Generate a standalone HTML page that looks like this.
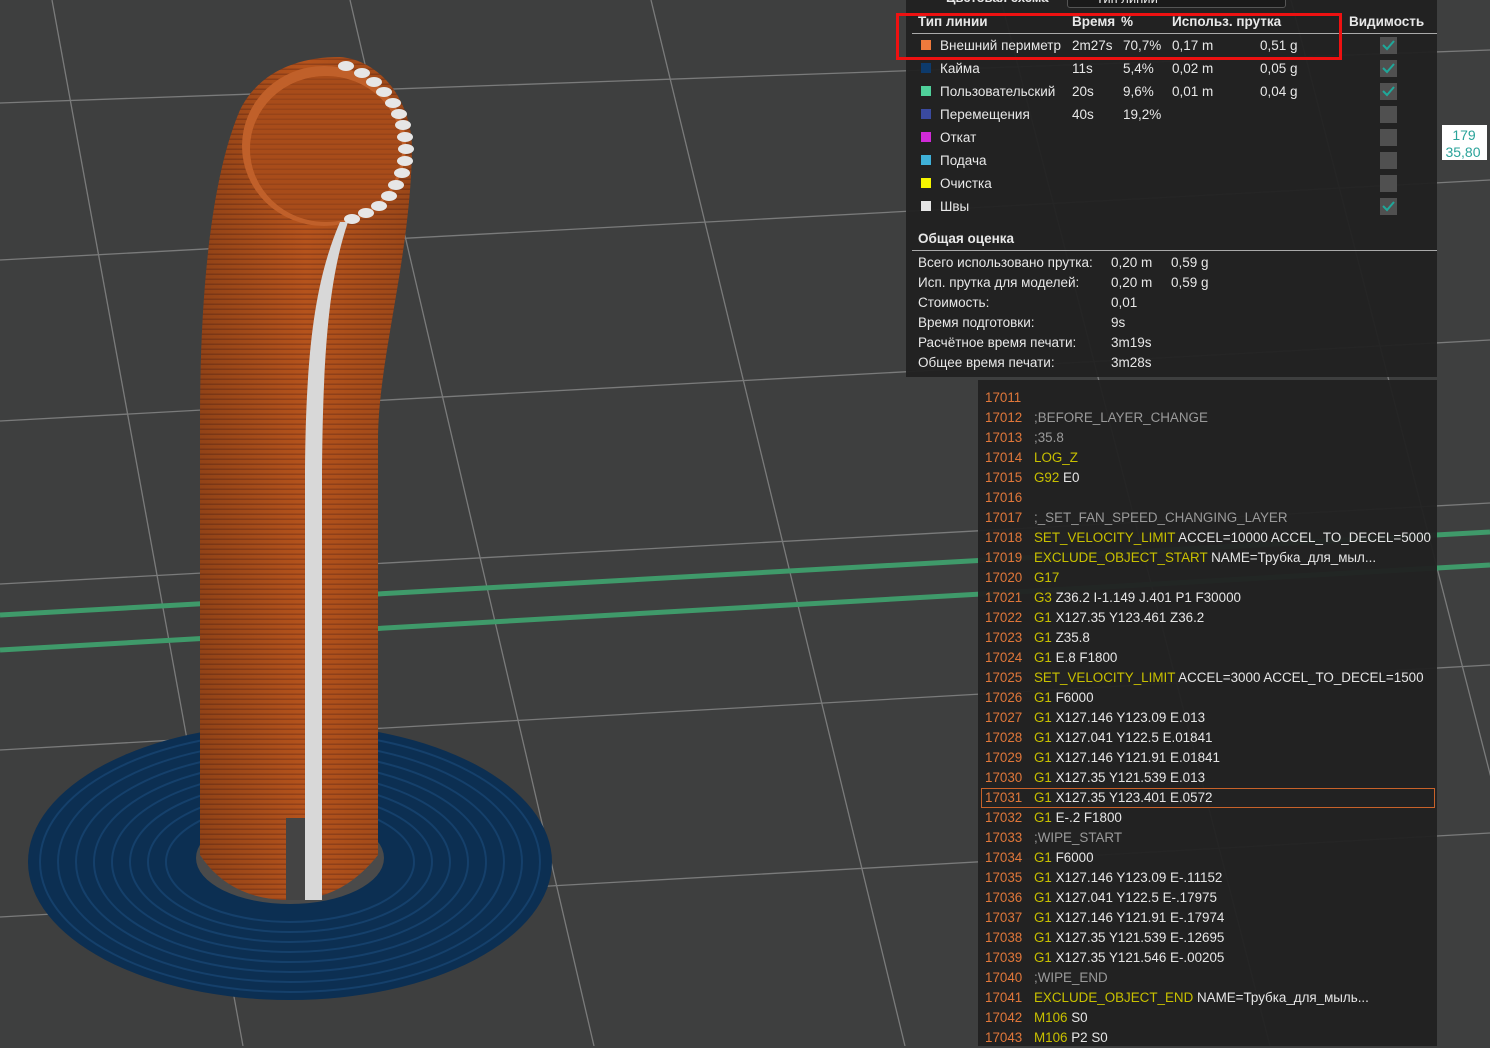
<!DOCTYPE html>
<html><head><meta charset="utf-8">
<style>
*{margin:0;padding:0;box-sizing:border-box}
body{width:1490px;height:1046px;overflow:hidden;background:#3e3f3f;font-family:"Liberation Sans","DejaVu Sans",sans-serif;position:relative}
svg.bg{position:absolute;left:0;top:0}
.panel{position:absolute;left:906px;top:0;width:531px;height:377px;background:rgba(33,33,33,0.96);color:#e8e8e8;font-size:13.5px}
.t{position:absolute;white-space:nowrap}
.b{font-weight:bold}
.sq{position:absolute;width:10px;height:10px}
.cb{position:absolute;left:474px;width:17px;height:17px;background:#505050}
.cb svg{position:absolute;left:2px;top:3px}
.code{position:absolute;left:978px;top:380px;width:459px;height:666px;background:rgba(33,33,33,0.96);font-size:13.4px;color:#e6e6e6}
.code div{position:absolute;left:7px;white-space:nowrap;height:20px;line-height:20px}
.n{color:#e0773a;display:inline-block;width:49px}
.y{color:#c8c000}
.g{color:#9a9a9a}
</style></head><body>
<svg class="bg" width="1490" height="1046" viewBox="0 0 1490 1046">
<g stroke="#8a8a8a" stroke-width="1.3" fill="none" opacity="0.8">
<line x1="52" y1="0" x2="243" y2="1046"/>
<line x1="350" y1="0" x2="594" y2="1046"/>
<line x1="651" y1="0" x2="905" y2="1046"/>
<line x1="1001" y1="0" x2="1270" y2="1046"/>
<line x1="1291" y1="0" x2="1560" y2="1046"/>
<line x1="0" y1="103" x2="1490" y2="50"/>
<line x1="0" y1="260" x2="1490" y2="180"/>
<line x1="0" y1="421" x2="1490" y2="340"/>
<line x1="0" y1="584" x2="1490" y2="503"/>
<line x1="0" y1="750" x2="1490" y2="665"/>
<line x1="0" y1="917" x2="1490" y2="833"/>
</g>
<line x1="0" y1="615" x2="1490" y2="532" stroke="#3f9a6a" stroke-width="5"/>
<line x1="0" y1="650" x2="1490" y2="565" stroke="#3f9a6a" stroke-width="5"/>
<!-- brim -->
<ellipse cx="290" cy="862" rx="262" ry="138" fill="#0c2f52"/>
<g fill="none" stroke="#15406b" stroke-width="2">
<ellipse cx="290" cy="862" rx="250" ry="130"/>
<ellipse cx="290" cy="862" rx="232" ry="120"/>
<ellipse cx="290" cy="862" rx="214" ry="110"/>
<ellipse cx="290" cy="862" rx="196" ry="100"/>
<ellipse cx="290" cy="862" rx="178" ry="90"/>
<ellipse cx="290" cy="862" rx="160" ry="80"/>
<ellipse cx="290" cy="862" rx="142" ry="70"/>
<ellipse cx="290" cy="862" rx="124" ry="60"/>
</g>
<ellipse cx="290" cy="858" rx="94" ry="46" fill="#4a4a4a"/>
<defs><pattern id="rib" width="6" height="5" patternUnits="userSpaceOnUse"><rect width="6" height="5" fill="#b5531c"/><rect y="3.5" width="6" height="1.5" fill="#94421a"/></pattern>
<linearGradient id="sh" x1="0" x2="1"><stop offset="0" stop-color="#000" stop-opacity="0.2"/><stop offset="0.5" stop-color="#000" stop-opacity="0"/><stop offset="1" stop-color="#000" stop-opacity="0.15"/></linearGradient></defs>
<path d="M200 855 L200 420 C200 300 210 180 240 110 C260 70 300 57 340 57 C380 60 412 100 412 150 C410 260 378 360 378 440 L378 855 C350 890 320 900 290 900 C250 900 220 885 200 855 Z" fill="url(#rib)"/>
<path d="M200 855 L200 420 C200 300 210 180 240 110 C260 70 300 57 340 57 C380 60 412 100 412 150 C410 260 378 360 378 440 L378 855 C350 890 320 900 290 900 C250 900 220 885 200 855 Z" fill="url(#sh)"/>
<!-- opening -->
<ellipse cx="324" cy="146" rx="82" ry="80" fill="#c0602a"/>
<ellipse cx="326" cy="149" rx="76" ry="73" fill="#9a4517"/>
<ellipse cx="326" cy="149" rx="76" ry="73" fill="url(#rib)" opacity="0.5"/>
<rect x="286" y="818" width="19" height="82" fill="#444"/>
<!-- seam -->
<path d="M305 900 L305 470 C306 350 315 280 340 222 L348 222 C328 280 323 360 322 470 L322 900 Z" fill="#d8d8d8"/>
<g fill="#e6e6e6">
<ellipse cx="346" cy="66" rx="8" ry="5"/><ellipse cx="362" cy="73" rx="8" ry="5"/><ellipse cx="374" cy="82" rx="8" ry="5"/><ellipse cx="384" cy="92" rx="8" ry="5"/><ellipse cx="393" cy="103" rx="8" ry="5"/><ellipse cx="399" cy="114" rx="8" ry="5"/><ellipse cx="403" cy="125" rx="8" ry="5"/><ellipse cx="405" cy="137" rx="8" ry="5"/><ellipse cx="406" cy="149" rx="8" ry="5"/><ellipse cx="405" cy="161" rx="8" ry="5"/><ellipse cx="402" cy="173" rx="8" ry="5"/><ellipse cx="396" cy="185" rx="8" ry="5"/><ellipse cx="389" cy="196" rx="8" ry="5"/><ellipse cx="379" cy="206" rx="8" ry="5"/><ellipse cx="366" cy="213" rx="8" ry="5"/><ellipse cx="352" cy="219" rx="8" ry="5"/>
</g>
<rect x="1442" y="125" width="45" height="35" fill="#fff"/>
<text x="1464" y="140" fill="#2aa39a" font-size="14" text-anchor="middle" font-family="Liberation Sans">179</text>
<text x="1463" y="157" fill="#2aa39a" font-size="14" text-anchor="middle" font-family="Liberation Sans">35,80</text>
</svg>

<div class="panel">
<div class="t b" style="left:40px;top:-10px;font-size:13px">Цветовая схема</div>
<div style="position:absolute;left:161px;top:-10px;width:219px;height:18px;border:1px solid #555;border-radius:3px;background:#1a1a1a"></div>
<div class="t" style="left:190px;top:-9px;font-size:13px">Тип линии</div>
<div class="t b" style="left:12px;top:14px">Тип линии</div>
<div class="t b" style="left:166px;top:14px">Время</div>
<div class="t b" style="left:215px;top:14px">%</div>
<div class="t b" style="left:266px;top:14px">Использ. прутка</div>
<div class="t b" style="left:443px;top:14px">Видимость</div>
<div style="position:absolute;left:6px;top:33px;width:525px;height:1px;background:#aaa"></div>

<div class="sq" style="left:15px;top:40px;background:#ef7a3c"></div>
<div class="t" style="left:34px;top:38px">Внешний периметр</div><div class="t" style="left:166px;top:38px">2m27s</div><div class="t" style="left:217px;top:38px">70,7%</div><div class="t" style="left:266px;top:38px">0,17 m</div><div class="t" style="left:354px;top:38px">0,51 g</div>
<div class="sq" style="left:15px;top:63px;background:#0d3a6b"></div>
<div class="t" style="left:34px;top:61px">Кайма</div><div class="t" style="left:166px;top:61px">11s</div><div class="t" style="left:217px;top:61px">5,4%</div><div class="t" style="left:266px;top:61px">0,02 m</div><div class="t" style="left:354px;top:61px">0,05 g</div>
<div class="sq" style="left:15px;top:86px;background:#4fd09a"></div>
<div class="t" style="left:34px;top:84px">Пользовательский</div><div class="t" style="left:166px;top:84px">20s</div><div class="t" style="left:217px;top:84px">9,6%</div><div class="t" style="left:266px;top:84px">0,01 m</div><div class="t" style="left:354px;top:84px">0,04 g</div>
<div class="sq" style="left:15px;top:109px;background:#3a4aa0"></div>
<div class="t" style="left:34px;top:107px">Перемещения</div><div class="t" style="left:166px;top:107px">40s</div><div class="t" style="left:217px;top:107px">19,2%</div>
<div class="sq" style="left:15px;top:132px;background:#d02ad8"></div>
<div class="t" style="left:34px;top:130px">Откат</div>
<div class="sq" style="left:15px;top:155px;background:#3fb0d8"></div>
<div class="t" style="left:34px;top:153px">Подача</div>
<div class="sq" style="left:15px;top:178px;background:#f5f500"></div>
<div class="t" style="left:34px;top:176px">Очистка</div>
<div class="sq" style="left:15px;top:201px;background:#e6e6e6"></div>
<div class="t" style="left:34px;top:199px">Швы</div>

<div class="cb" style="top:37px"><svg width="13" height="11"><path d="M1 5 L5 9 L12 1" stroke="#1fa89a" stroke-width="2" fill="none"/></svg></div>
<div class="cb" style="top:60px"><svg width="13" height="11"><path d="M1 5 L5 9 L12 1" stroke="#1fa89a" stroke-width="2" fill="none"/></svg></div>
<div class="cb" style="top:83px"><svg width="13" height="11"><path d="M1 5 L5 9 L12 1" stroke="#1fa89a" stroke-width="2" fill="none"/></svg></div>
<div class="cb" style="top:106px"></div>
<div class="cb" style="top:129px"></div>
<div class="cb" style="top:152px"></div>
<div class="cb" style="top:175px"></div>
<div class="cb" style="top:198px"><svg width="13" height="11"><path d="M1 5 L5 9 L12 1" stroke="#1fa89a" stroke-width="2" fill="none"/></svg></div>

<div class="t b" style="left:12px;top:231px">Общая оценка</div>
<div style="position:absolute;left:6px;top:250px;width:525px;height:1px;background:#aaa"></div>
<div class="t" style="left:12px;top:255px">Всего использовано прутка:</div><div class="t" style="left:205px;top:255px">0,20 m</div><div class="t" style="left:265px;top:255px">0,59 g</div>
<div class="t" style="left:12px;top:275px">Исп. прутка для моделей:</div><div class="t" style="left:205px;top:275px">0,20 m</div><div class="t" style="left:265px;top:275px">0,59 g</div>
<div class="t" style="left:12px;top:295px">Стоимость:</div><div class="t" style="left:205px;top:295px">0,01</div>
<div class="t" style="left:12px;top:315px">Время подготовки:</div><div class="t" style="left:205px;top:315px">9s</div>
<div class="t" style="left:12px;top:335px">Расчётное время печати:</div><div class="t" style="left:205px;top:335px">3m19s</div>
<div class="t" style="left:12px;top:355px">Общее время печати:</div><div class="t" style="left:205px;top:355px">3m28s</div>
</div>
<div style="position:absolute;left:896px;top:13px;width:446px;height:47px;border:3px solid #ee1111"></div>

<div class="code">
<div style="top:8px"><span class="n">17011</span></div>
<div style="top:28px"><span class="n">17012</span><span class="g">;BEFORE_LAYER_CHANGE</span></div>
<div style="top:48px"><span class="n">17013</span><span class="g">;35.8</span></div>
<div style="top:68px"><span class="n">17014</span><span class="y">LOG_Z</span></div>
<div style="top:88px"><span class="n">17015</span><span class="y">G92</span> E0</div>
<div style="top:108px"><span class="n">17016</span></div>
<div style="top:128px"><span class="n">17017</span><span class="g">;_SET_FAN_SPEED_CHANGING_LAYER</span></div>
<div style="top:148px"><span class="n">17018</span><span class="y">SET_VELOCITY_LIMIT</span> ACCEL=10000 ACCEL_TO_DECEL=5000</div>
<div style="top:168px"><span class="n">17019</span><span class="y">EXCLUDE_OBJECT_START</span> NAME=Трубка_для_мыл...</div>
<div style="top:188px"><span class="n">17020</span><span class="y">G17</span></div>
<div style="top:208px"><span class="n">17021</span><span class="y">G3</span> Z36.2 I-1.149 J.401 P1 F30000</div>
<div style="top:228px"><span class="n">17022</span><span class="y">G1</span> X127.35 Y123.461 Z36.2</div>
<div style="top:248px"><span class="n">17023</span><span class="y">G1</span> Z35.8</div>
<div style="top:268px"><span class="n">17024</span><span class="y">G1</span> E.8 F1800</div>
<div style="top:288px"><span class="n">17025</span><span class="y">SET_VELOCITY_LIMIT</span> ACCEL=3000 ACCEL_TO_DECEL=1500</div>
<div style="top:308px"><span class="n">17026</span><span class="y">G1</span> F6000</div>
<div style="top:328px"><span class="n">17027</span><span class="y">G1</span> X127.146 Y123.09 E.013</div>
<div style="top:348px"><span class="n">17028</span><span class="y">G1</span> X127.041 Y122.5 E.01841</div>
<div style="top:368px"><span class="n">17029</span><span class="y">G1</span> X127.146 Y121.91 E.01841</div>
<div style="top:388px"><span class="n">17030</span><span class="y">G1</span> X127.35 Y121.539 E.013</div>
<div style="top:408px;left:3px;width:454px;border:1px solid #c8622a;padding-left:3px;line-height:18px"><span class="n">17031</span><span class="y">G1</span> X127.35 Y123.401 E.0572</div>
<div style="top:428px"><span class="n">17032</span><span class="y">G1</span> E-.2 F1800</div>
<div style="top:448px"><span class="n">17033</span><span class="g">;WIPE_START</span></div>
<div style="top:468px"><span class="n">17034</span><span class="y">G1</span> F6000</div>
<div style="top:488px"><span class="n">17035</span><span class="y">G1</span> X127.146 Y123.09 E-.11152</div>
<div style="top:508px"><span class="n">17036</span><span class="y">G1</span> X127.041 Y122.5 E-.17975</div>
<div style="top:528px"><span class="n">17037</span><span class="y">G1</span> X127.146 Y121.91 E-.17974</div>
<div style="top:548px"><span class="n">17038</span><span class="y">G1</span> X127.35 Y121.539 E-.12695</div>
<div style="top:568px"><span class="n">17039</span><span class="y">G1</span> X127.35 Y121.546 E-.00205</div>
<div style="top:588px"><span class="n">17040</span><span class="g">;WIPE_END</span></div>
<div style="top:608px"><span class="n">17041</span><span class="y">EXCLUDE_OBJECT_END</span> NAME=Трубка_для_мыль...</div>
<div style="top:628px"><span class="n">17042</span><span class="y">M106</span> S0</div>
<div style="top:648px"><span class="n">17043</span><span class="y">M106</span> P2 S0</div>
</div>
</body></html>
